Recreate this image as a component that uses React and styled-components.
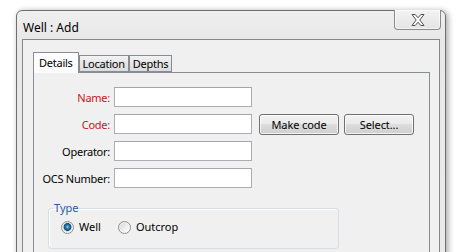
import React from "react";
import styled, { createGlobalStyle } from "styled-components";

const GlobalStyle = createGlobalStyle`
  html, body {
    margin: 0;
    padding: 0;
    background: #ffffff;
    overflow: hidden;
  }
  body {
    font-family: "Noto Sans", "Segoe UI", sans-serif;
    font-size: 11px;
    color: #000;
  }
`;

const Page = styled.div`
  width: 462px;
  height: 252px;
  box-sizing: border-box;
  padding: 10px 0 0 16px;
  overflow: hidden;
`;

const Window = styled.div`
  width: 430px;
  box-sizing: border-box;
  padding: 0 5px;
  border: 1px solid #6e6e6e;
  border-radius: 6px 6px 0 0;
  background: linear-gradient(#efefef, #e8e8e8 28px, #ebebeb);
  box-shadow: 2px 1px 6px rgba(0, 0, 0, 0.35);
`;

const TitleBar = styled.div`
  height: 28px;
  display: flex;
  align-items: flex-start;
  justify-content: space-between;
`;

const Title = styled.div`
  margin: 9px 0 0 1px;
  font-size: 12px;
  line-height: 16px;
  color: #000;
`;

const CloseButton = styled.div`
  width: 47px;
  height: 20px;
  margin-top: -1px;
  margin-right: -1px;
  box-sizing: border-box;
  display: flex;
  align-items: center;
  justify-content: center;
  border: 1px solid #8a8a8a;
  border-top: none;
  border-radius: 0 0 4px 4px;
  background: linear-gradient(#f3f3f3, #e4e4e4);
  box-shadow: inset 0 0 0 1px rgba(255, 255, 255, 0.6);
`;

const Client = styled.div`
  border: 1px solid #868686;
  background: #f0f0f0;
  padding: 12px 9px 40px 10px;
`;

const TabStrip = styled.div`
  display: flex;
  align-items: flex-end;
  position: relative;
  z-index: 1;
`;

const Tab = styled.div`
  box-sizing: border-box;
  height: ${(p) => (p.$active ? "21px" : "17px")};
  margin-bottom: ${(p) => (p.$active ? "-1px" : "0")};
  padding: ${(p) => (p.$active ? "2px 5px 0" : "0 3px")};
  border: 1px solid #898c95;
  border-bottom: ${(p) => (p.$active ? "none" : "1px solid #898c95")};
  background: ${(p) =>
    p.$active ? "#fcfcfc" : "linear-gradient(#f3f3f3, #e5e5e5 50%, #dcdcdc)"};
  font-size: 11px;
  line-height: 15px;
  letter-spacing: -0.25px;
  white-space: nowrap;
`;

const Panel = styled.div`
  border: 1px solid #898c95;
  background: #f0f0f0;
  padding: 14px 0 30px 0;
  display: flex;
  flex-direction: column;
  gap: 7px;
`;

const Row = styled.div`
  display: flex;
  align-items: center;
  height: 20px;
`;

const Label = styled.div`
  width: 76px;
  margin-right: 4px;
  text-align: right;
  font-size: 11px;
  letter-spacing: -0.25px;
  color: ${(p) => (p.$required ? "#c8161d" : "#000")};
  white-space: nowrap;
`;

const Input = styled.div`
  width: 138px;
  height: 20px;
  box-sizing: border-box;
  background: #fff;
  border: 1px solid #abadb3;
  border-top-color: #a3a5ab;
`;

const Button = styled.div`
  width: ${(p) => p.$width}px;
  height: 21px;
  box-sizing: border-box;
  margin-left: ${(p) => p.$gap}px;
  display: flex;
  align-items: center;
  justify-content: center;
  border: 1px solid #707070;
  border-radius: 3px;
  background: linear-gradient(#f2f2f2, #ebebeb 45%, #dddddd 50%, #cfcfcf);
  box-shadow: inset 0 0 0 1px rgba(255, 255, 255, 0.75);
  font-size: 11px;
  letter-spacing: -0.1px;
`;

const GroupBox = styled.fieldset`
  width: 291px;
  box-sizing: border-box;
  margin: 5px 0 0 14px;
  padding: 4px 12px 14px;
  border: 1px solid #d5dfe5;
  border-radius: 3px;
  box-shadow: inset 1px 1px 0 #fff;
`;

const Legend = styled.legend`
  margin-left: -8px;
  padding: 0 1px;
  font-size: 11px;
  line-height: 16px;
  color: #2a5aa8;
`;

const RadioRow = styled.div`
  display: flex;
  align-items: center;
  gap: 17px;
`;

const RadioItem = styled.label`
  display: flex;
  align-items: center;
  gap: 5px;
  font-size: 11px;
  line-height: 14px;
`;

const RadioCircle = styled.span`
  width: 13px;
  height: 13px;
  box-sizing: border-box;
  border-radius: 50%;
  border: 1px solid #8d8e8f;
  background: ${(p) =>
    p.$checked
      ? "radial-gradient(circle at 50% 45%, #8fd0f2 0, #2d84bb 1.6px, #12466e 3.6px, #cfcfcf 4.2px, #e4e4e4 5px, #f6f6f6 6px)"
      : "linear-gradient(135deg, #d6d6d6, #f4f4f4 70%, #fbfbfb)"};
  box-shadow: inset 0 0 0 1px rgba(255, 255, 255, 0.5);
`;

const CloseIcon = () => (
  <svg width="14" height="12" viewBox="0 0 14 12">
    <polygon
      points="1,0.5 4.2,0.5 7,3.8 9.8,0.5 13,0.5 8.8,6 13,11.5 9.8,11.5 7,8.2 4.2,11.5 1,11.5 5.2,6"
      fill="#fdfdfd"
      stroke="#4e4e4e"
      strokeWidth="1"
      strokeLinejoin="round"
    />
  </svg>
);

const fields = [
  { label: "Name:", required: true },
  { label: "Code:", required: true, buttons: true },
  { label: "Operator:" },
  { label: "OCS Number:" },
];

export default function App() {
  return (
    <>
      <GlobalStyle />
      <Page>
        <Window>
          <TitleBar>
            <Title>Well : Add</Title>
            <CloseButton>
              <CloseIcon />
            </CloseButton>
          </TitleBar>
          <Client>
            <TabStrip>
              <Tab $active>Details</Tab>
              <Tab>Location</Tab>
              <Tab>Depths</Tab>
            </TabStrip>
            <Panel>
              {fields.map((f) => (
                <Row key={f.label}>
                  <Label $required={f.required}>{f.label}</Label>
                  <Input />
                  {f.buttons && (
                    <>
                      <Button $width={80} $gap={7}>
                        Make code
                      </Button>
                      <Button $width={70} $gap={5}>
                        Select...
                      </Button>
                    </>
                  )}
                </Row>
              ))}
              <GroupBox>
                <Legend>Type</Legend>
                <RadioRow>
                  <RadioItem>
                    <RadioCircle $checked />
                    Well
                  </RadioItem>
                  <RadioItem>
                    <RadioCircle />
                    Outcrop
                  </RadioItem>
                </RadioRow>
              </GroupBox>
            </Panel>
          </Client>
        </Window>
      </Page>
    </>
  );
}
